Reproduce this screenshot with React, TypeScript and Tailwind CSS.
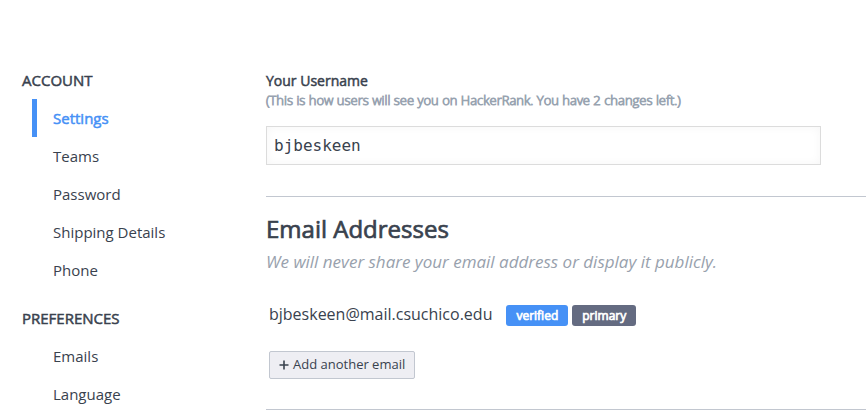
const sections = [
  {
    title: "ACCOUNT",
    items: ["Settings", "Teams", "Password", "Shipping Details", "Phone"],
  },
  { title: "PREFERENCES", items: ["Emails", "Language"] },
];

function Sidebar({ active }: { active: string }) {
  return (
    <nav className="flex w-[266px] shrink-0 flex-col gap-[10px] pl-[22px] text-[15px] leading-[38px]">
      {sections.map((section) => (
        <section key={section.title}>
          <h3 className="[-webkit-text-stroke:0.5px]">{section.title}</h3>
          <ul className="pl-[10px]">
            {section.items.map((item) => (
              <li key={item}>
                <a
                  href="#"
                  className={
                    item === active
                      ? "block border-l-[5px] border-[#4691f6] pl-4 text-[#4691f6] [-webkit-text-stroke:0.5px]"
                      : "block border-l-[5px] border-transparent pl-4"
                  }
                >
                  {item}
                </a>
              </li>
            ))}
          </ul>
        </section>
      ))}
    </nav>
  );
}

export default function App() {
  return (
    <div className="flex min-h-screen bg-white pt-[61px] font-['Open_Sans',sans-serif] text-[#39424e]">
      <Sidebar active="Settings" />
      <main className="min-w-0 flex-1 pt-[10px]">
        <form className="mb-[31px] mr-[45px]">
          <label htmlFor="username" className="block text-[14px] leading-5 [-webkit-text-stroke:0.5px]">
            Your Username
          </label>
          <p id="username-hint" className="mb-[16px] text-[13px] font-light leading-[19px] text-[#98a3b0] [-webkit-text-stroke:0.9px]">
            (This is how users will see you on HackerRank. You have 2 changes left.)
          </p>
          <input
            id="username"
            type="text"
            defaultValue="bjbeskeen"
            aria-describedby="username-hint"
            className="block h-[39px] w-full border border-[#dcdcdc] bg-white px-[7px] font-['DejaVu_Sans_Mono',monospace] text-[16px] shadow-[inset_0_0_10px_rgba(0,0,0,0.04)] outline-none"
          />
        </form>
        <section className="border-y border-[#c2c7d0] pb-[30px] pt-[14px]">
          <h2 className="text-[24px] leading-9 [-webkit-text-stroke:0.7px]">Email Addresses</h2>
          <p className="text-[17px] italic leading-[30px] text-[#98a1ad]">
            We will never share your email address or display it publicly.
          </p>
          <div className="ml-[3px] mt-[28px] flex items-start gap-1">
            <span className="mr-[10px] text-[16px] leading-[18px]">bjbeskeen@mail.csuchico.edu</span>
            <span className="rounded-[3px] bg-[#4691f6] px-[10px] text-[12px] leading-[21px] text-white [-webkit-text-stroke:0.7px]">verified</span>
            <span className="rounded-[3px] bg-[#646b81] px-[10px] text-[12px] leading-[21px] text-white [-webkit-text-stroke:0.7px]">primary</span>
          </div>
          <button
            type="button"
            className="ml-[3px] mt-[25px] flex h-7 items-center gap-1 rounded-[2px] border border-[#c2c7d0] bg-[#eeeef3] px-[9px] text-[13px]"
          >
            <svg aria-hidden="true" viewBox="0 0 10 10" className="size-[10px]">
              <path d="M4.2 0.5h1.6v3.7h3.7v1.6H5.8v3.7H4.2V5.8H0.5V4.2h3.7z" fill="currentColor" />
            </svg>
            Add another email
          </button>
        </section>
      </main>
    </div>
  );
}
